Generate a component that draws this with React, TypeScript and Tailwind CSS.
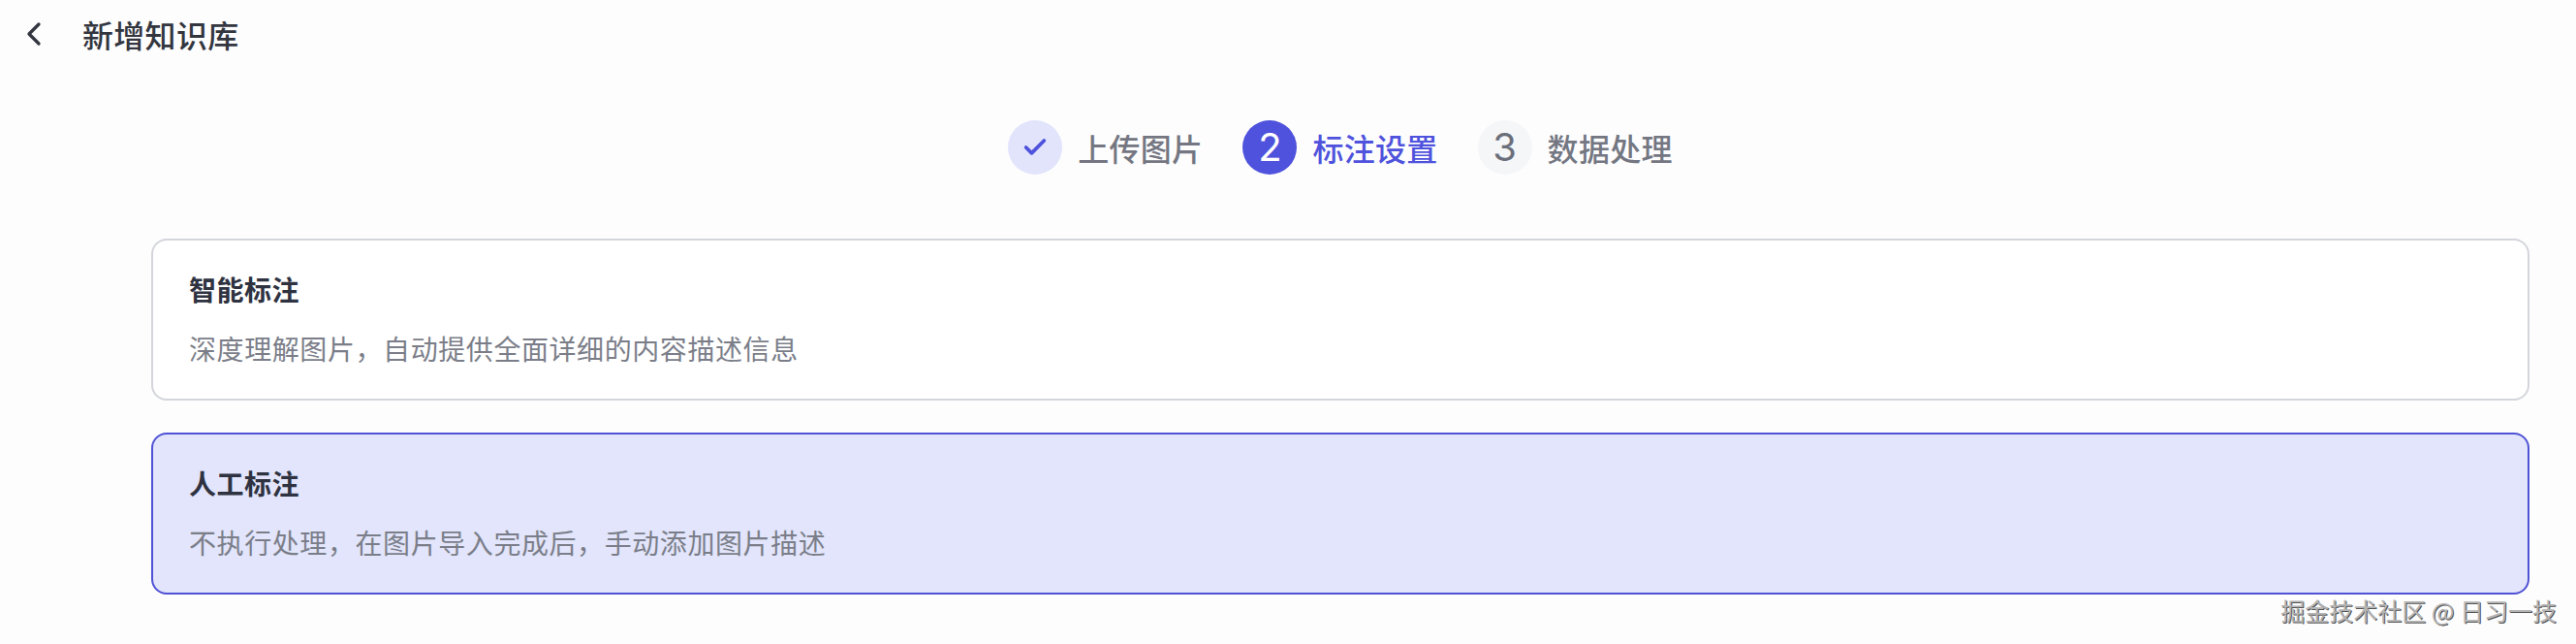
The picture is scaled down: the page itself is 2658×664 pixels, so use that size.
import { ChevronLeft, Check } from "lucide-react";

const font = { fontFamily: '"Noto Sans CJK SC", sans-serif' };

function Step({ label, status, index }: { label: string; status: "done" | "active" | "todo"; index: number }) {
  return (
    <div className="flex items-center gap-[16px]">
      {status === "done" ? (
        <div className="flex h-[56px] w-[56px] items-center justify-center rounded-full bg-[#e1e4fb] text-[#4f52dc]">
          <Check size={28} strokeWidth={3.2} />
        </div>
      ) : null}
      {status === "active" ? (
        <div className="flex h-[56px] w-[56px] items-center justify-center rounded-full bg-[#4f52dc] font-['Inter'] text-[40px] text-white">
          {index}
        </div>
      ) : null}
      {status === "todo" ? (
        <div className="flex h-[56px] w-[56px] items-center justify-center rounded-full bg-[#f5f6f8] font-['Inter'] text-[40px] text-[#6b6f7b]">
          {index}
        </div>
      ) : null}
      <div
        className={
          status === "active"
            ? "text-[32px] leading-[44px] font-medium tracking-[0.3px] text-[#4f52dc]"
            : "text-[32px] leading-[44px] font-medium tracking-[0.3px] text-[#747782]"
        }
      >
        {label}
      </div>
    </div>
  );
}

function OptionCard({ title, desc, selected }: { title: string; desc: string; selected?: boolean }) {
  return (
    <div
      className={
        selected
          ? "h-[167px] rounded-[16px] border-2 border-[#4f52d4] bg-[#e2e5fb] px-[37px] pt-[30px]"
          : "h-[167px] rounded-[16px] border-2 border-[#d3d5da] bg-white px-[37px] pt-[30px]"
      }
    >
      <div className="text-[28px] leading-[40px] font-bold tracking-[0.5px] text-[#2f3240]">{title}</div>
      <div className="mt-[21px] text-[28px] leading-[40px] tracking-[0.58px] text-[#7b7e89]">{desc}</div>
    </div>
  );
}

export default function App() {
  return (
    <div className="relative h-[664px] w-[2658px] overflow-hidden bg-[#fdfdfe]" style={font}>
      <div className="flex h-[70px] items-center pl-[15px]">
        <ChevronLeft size={40} strokeWidth={2} className="text-[#33363f]" />
        <div className="ml-[30px] text-[32px] leading-[44px] font-medium tracking-[0.3px] text-[#33363f]">新增知识库</div>
      </div>
      <div className="ml-[156px] mr-[48px]">
        <div className="mt-[54px] flex items-center justify-center gap-[41px]">
          <Step label="上传图片" status="done" index={1} />
          <Step label="标注设置" status="active" index={2} />
          <Step label="数据处理" status="todo" index={3} />
        </div>
        <div className="mt-[66px] flex flex-col gap-[33px]">
          <OptionCard title="智能标注" desc={"深度理解图片\uFF0C自动提供全面详细的内容描述信息"} />
          <OptionCard title="人工标注" desc={"不执行处理\uFF0C在图片导入完成后\uFF0C手动添加图片描述"} selected />
        </div>
      </div>
      <div className="absolute right-[20px] bottom-[17px] text-[25px] leading-[36px] text-[#b4b4b4] [text-shadow:1px_1px_0_#555]">
        掘金技术社区 @ 日习一技
      </div>
    </div>
  );
}
